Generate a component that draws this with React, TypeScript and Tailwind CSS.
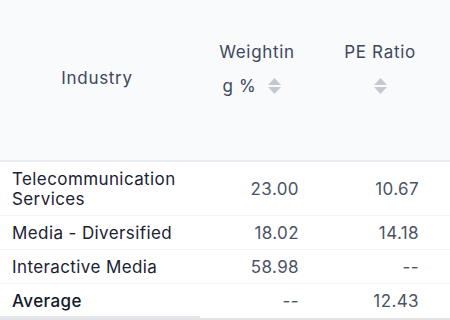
const rows = [
  { name: ["Telecommunication", "Services"], weight: "23.00", pe: "10.67" },
  { name: ["Media - Diversified"], weight: "18.02", pe: "14.18" },
  { name: ["Interactive Media"], weight: "58.98", pe: "--" },
];

function SortIcon() {
  return (
    <svg width="15" height="18" viewBox="0 0 15 18" className="inline-block">
      <path d="M7.5 1 L14 8 H1 Z" fill="#c4c8d0" />
      <path d="M1 10 H14 L7.5 17 Z" fill="#c4c8d0" />
    </svg>
  );
}

export default function App() {
  return (
    <div
      className="w-[450px] h-[320px] bg-white overflow-hidden relative"
      style={{ fontFamily: "Inter, 'Liberation Sans', sans-serif" }}
    >
      <div className="grid grid-cols-[190px_130px_130px] h-[162px] bg-[#f9fafb] border-b-2 border-[#e9edf3] text-[17px] leading-[24px] tracking-[0.7px] text-[#3d475e]">
        <div className="flex items-center justify-center pl-[4px] pb-[4px]">Industry</div>
        <div className="flex flex-col items-center pt-[40px] pl-[4px] gap-[10px]">
          <span>Weightin</span>
          <span className="flex items-center gap-[10px] pr-[10px]">
            g % <SortIcon />
          </span>
        </div>
        <div className="flex flex-col items-center pt-[40px] pr-[10px] gap-[10px]">
          <span>PE Ratio</span>
          <span className="flex items-center h-[24px]">
            <SortIcon />
          </span>
        </div>
      </div>

      {rows.map((r) => (
        <div
          key={r.name.join(" ")}
          className="grid grid-cols-[190px_130px_130px] items-center border-b border-[#f1f3f6] text-[17px] leading-[20px] tracking-[0.4px] py-[6.5px]"
        >
          <div className="pl-[12px] text-[#1b2233]">
            {r.name.map((n) => (
              <div key={n}>{n}</div>
            ))}
          </div>
          <div className="text-right pr-[21px] text-[#4a5368]">{r.weight}</div>
          <div className="text-right pr-[31px] text-[#4a5368]">{r.pe}</div>
        </div>
      ))}

      <div className="grid grid-cols-[190px_130px_130px] items-center text-[17px] leading-[20px] tracking-[0.4px] py-[6.5px]">
        <div className="pl-[12px] text-[#111827] font-medium">Average</div>
        <div className="text-right pr-[21px] text-[#4a5368]">--</div>
        <div className="text-right pr-[31px] text-[#4a5368]">12.43</div>
      </div>

      <div className="absolute left-0 right-0 bottom-0 h-[4px] bg-white">
        <div className="h-[2px] w-[200px] bg-[#e3e8f0]"></div>
        <div className="h-[2px] bg-[#e4e4e4]"></div>
      </div>
    </div>
  );
}
